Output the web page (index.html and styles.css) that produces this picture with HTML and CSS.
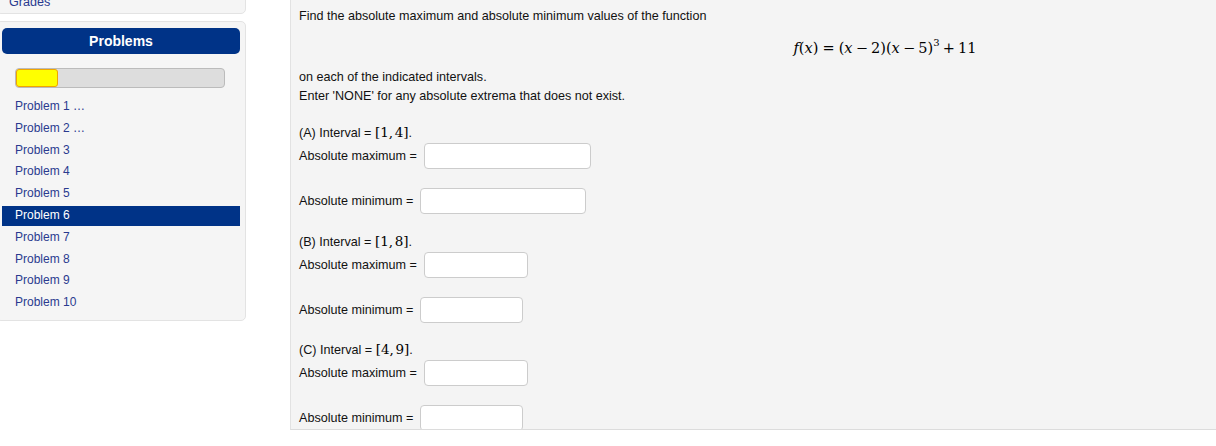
FILE: index.html
```html
<!DOCTYPE html>
<html>
<head>
<meta charset="utf-8">
<link rel="stylesheet" href="styles.css">
</head>
<body>
<div class="page">
  <aside class="sidebar">
    <div class="well well-top"><a class="nav-link" href="#">Grades</a></div>
    <div class="well well-problems">
      <div class="problems-head">Problems</div>
      <div class="progress"><div class="progress-fill" style="width:42px"></div></div>
      <ul class="plist">
        <li><a href="#">Problem 1 …</a></li>
        <li><a href="#">Problem 2 …</a></li>
        <li><a href="#">Problem 3</a></li>
        <li><a href="#">Problem 4</a></li>
        <li><a href="#">Problem 5</a></li>
        <li><a class="active" href="#">Problem 6</a></li>
        <li><a href="#">Problem 7</a></li>
        <li><a href="#">Problem 8</a></li>
        <li><a href="#">Problem 9</a></li>
        <li><a href="#">Problem 10</a></li>
      </ul>
    </div>
  </aside>
  <main class="main">
    <div class="line">Find the absolute maximum and absolute minimum values of the function</div>
    <div class="formula"><span class="m"><i>f</i>(<i>x</i>)<span class="rel">=</span>(<i>x</i><span class="bin">−</span>2)(<i>x</i><span class="bin">−</span>5)<sup>3</sup><span class="bin">+</span>11</span></div>
    <div class="line">on each of the indicated intervals.</div>
    <div class="line">Enter 'NONE' for any absolute extrema that does not exist.</div>

    <div class="line lgap">(A) Interval = <span class="mi">[1,<span class="thin"></span>4]</span>.</div>
    <div class="row"><span>Absolute maximum =</span><input class="ans wide" type="text"></div>
    <div class="row rgap"><span>Absolute minimum =</span><input class="ans wide2" type="text"></div>

    <div class="line lgap">(B) Interval = <span class="mi">[1,<span class="thin"></span>8]</span>.</div>
    <div class="row"><span>Absolute maximum =</span><input class="ans narrow" type="text"></div>
    <div class="row rgap"><span>Absolute minimum =</span><input class="ans narrow2" type="text"></div>

    <div class="line lgap">(C) Interval = <span class="mi">[4,<span class="thin"></span>9]</span>.</div>
    <div class="row"><span>Absolute maximum =</span><input class="ans narrow" type="text"></div>
    <div class="row rgap"><span>Absolute minimum =</span><input class="ans narrow2" type="text"></div>
  </main>
</div>
</body>
</html>
```
FILE: styles.css
```css
* { box-sizing: border-box; }
html, body { margin: 0; padding: 0; background: #fff; }
body {
  font-family: "Liberation Sans", Arial, sans-serif;
  font-size: 12px;
  color: #1a1a1a;
  height: 446px;
  overflow: hidden;
}
.page {
  display: flex;
  align-items: flex-start;
}
.sidebar {
  width: 250px;
  margin-left: -4px;
  flex: none;
}
.well {
  background: #f5f5f5;
  border: 1px solid #e3e3e3;
  border-radius: 5px;
}
.well-top {
  margin-top: -14px;
  padding: 5px 12px 1px 12px;
  line-height: 20px;
  font-size: 12.6px;
}
.nav-link, .plist a {
  color: #2a3a8f;
  text-decoration: none;
}
.well-problems {
  margin-top: 7px;
  padding: 6px 5px 5px 5px;
}
.problems-head {
  background: #003387;
  color: #fff;
  font-weight: bold;
  font-size: 14px;
  text-align: center;
  height: 26px;
  line-height: 26px;
  border-radius: 5px;
}
.progress {
  margin: 14px 0 0 13px;
  width: 210px;
  height: 20px;
  background: #dddddd;
  border: 1px solid #bbbbbb;
  border-radius: 4px;
}
.progress-fill {
  height: 18px;
  background: #ffff00;
  border: 1px solid #f0a500;
  border-radius: 3px;
}
.plist {
  list-style: none;
  margin: 9px 0 0 0;
  padding: 0;
}
.plist a {
  display: block;
  padding: 0 13px;
  line-height: 19.8px;
  margin-bottom: 2px;
}
.plist a.active {
  background: #003387;
  color: #fff;
}
.main {
  flex: 1;
  margin-left: 44px;
  height: 430px;
  background: #f4f4f4;
  border-left: 1px solid #e2e2e2;
  border-bottom: 1px solid #dcdcdc;
  padding: 6.5px 0 0 8px;
  overflow: hidden;
  color: #111;
  font-size: 12.6px;
}
.line { line-height: 19px; height: 19px; white-space: nowrap; }
.row {
  display: flex;
  align-items: center;
  height: 26px;
  white-space: nowrap;
}
.lgap { margin-top: 18.5px; }
.rgap { margin-top: 19px; }
.formula {
  width: 1172px;
  text-align: center;
  padding-top: 4px;
  line-height: 38px;
  height: 42px;
}
.m, .mi {
  font-family: "DejaVu Serif", "Liberation Serif", serif;
  color: #000;
  line-height: 1;
}
.m { font-size: 14.5px; }
.mi { font-size: 13.5px; }
.m i { font-style: italic; }
.rel { margin: 0 0.28em; }
.bin { margin: 0 0.22em; }
.thin { display: inline-block; width: 0.12em; }
.m sup { font-size: 10px; vertical-align: 7px; line-height: 0; }
.ans {
  height: 26px;
  margin: 0 0 0 7px;
  border: 1px solid #cccccc;
  border-radius: 4px;
  background: #fff;
  font: inherit;
  padding: 2px 6px;
}
.wide { width: 167px; }
.wide2 { width: 166px; }
.narrow { width: 104px; }
.narrow2 { width: 103px; }
```
